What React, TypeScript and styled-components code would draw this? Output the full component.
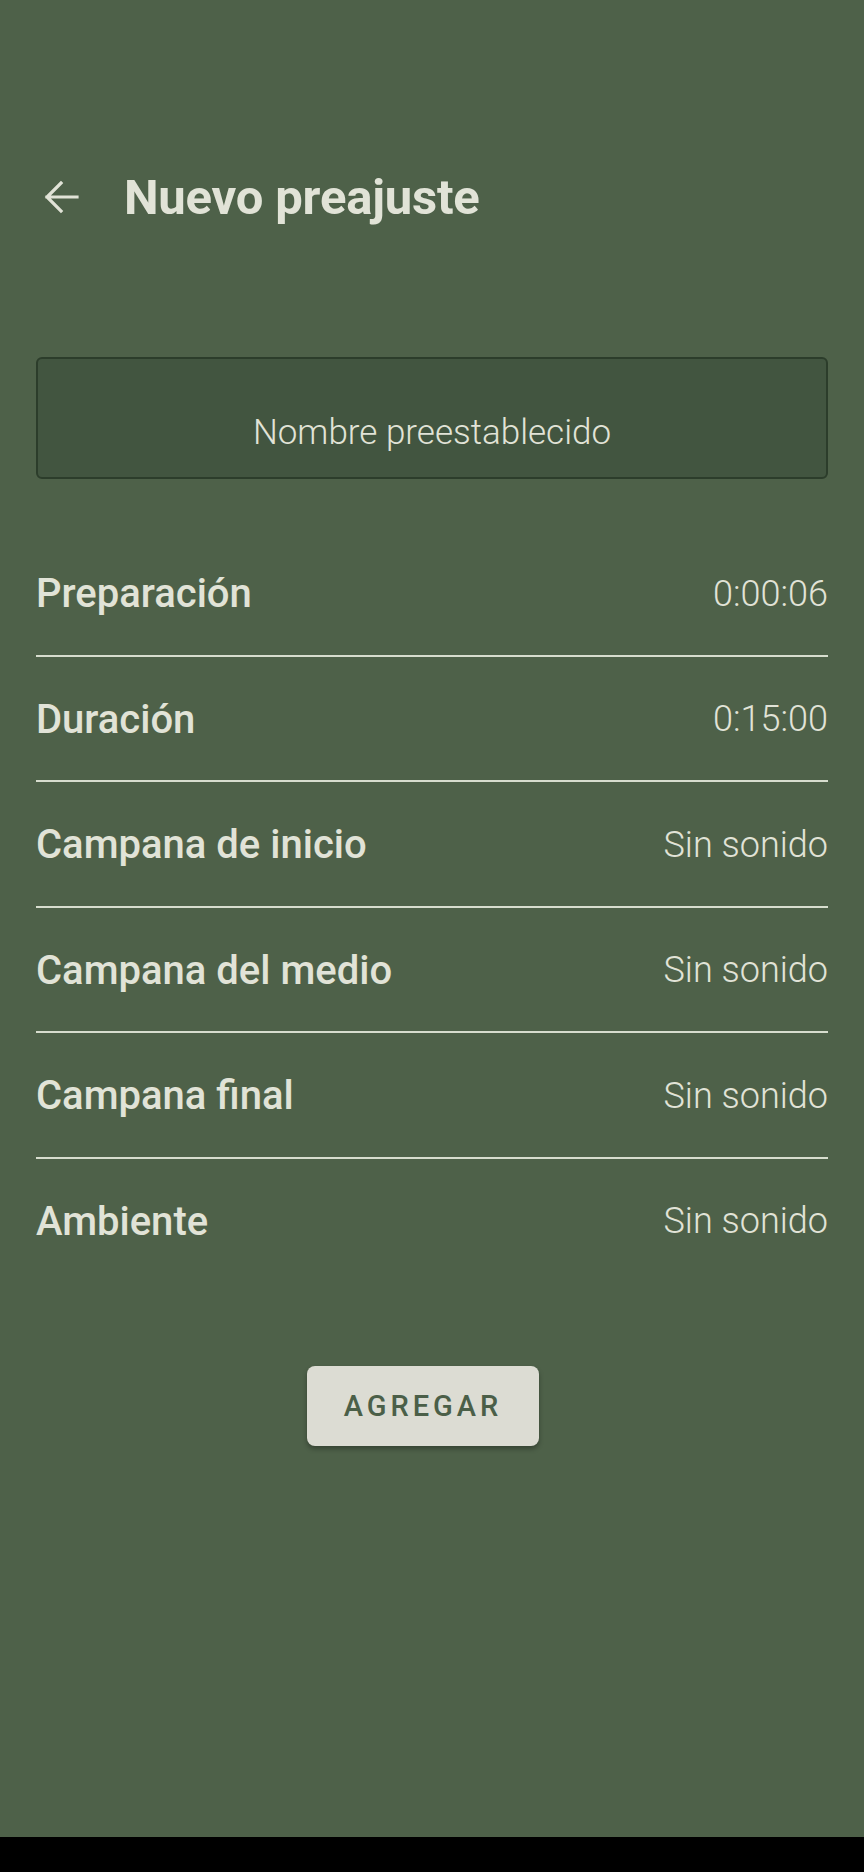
import styled, { createGlobalStyle } from 'styled-components';

const GlobalStyle = createGlobalStyle`
	html, body {
		margin: 0;
		padding: 0;
		background: #000;
	}
	* {
		box-sizing: border-box;
	}
`;

const StyledScreen = styled.div`
	display: flex;
	flex-direction: column;
	width: 864px;
	height: 1872px;
	font-family: Roboto, 'Noto Sans', sans-serif;
	color: #e1e3d7;
`;

const StyledMain = styled.main`
	flex: 1;
	background: #4e6149;
	display: flex;
	flex-direction: column;
`;

const StyledHeader = styled.header`
	display: flex;
	align-items: center;
	height: 120px;
	margin-top: 137px;
	padding-left: 43px;
	gap: 45px;
`;

const StyledBack = styled.button`
	display: flex;
	align-items: center;
	justify-content: center;
	width: 36px;
	height: 36px;
	padding: 0;
	border: none;
	background: none;
	color: #e1e3d7;
`;

const StyledTitle = styled.h1`
	margin: 0;
	font-size: 49px;
	font-weight: 700;
	letter-spacing: -0.2px;
`;

const StyledContent = styled.div`
	display: flex;
	flex-direction: column;
	padding: 0 36px;
`;

const StyledNameField = styled.div`
	display: flex;
	justify-content: center;
	align-items: flex-start;
	height: 122px;
	margin-top: 100px;
	padding-top: 54px;
	border: 2px solid #2c3d2b;
	border-radius: 6px;
	background: #425540;
	font-size: 35px;
	font-weight: 300;
	line-height: 40px;
	color: #e1e3d7;
`;

const StyledList = styled.div`
	display: flex;
	flex-direction: column;
	margin-top: 52px;
`;

const StyledRow = styled.div<{ $last?: boolean }>`
	display: flex;
	align-items: center;
	justify-content: space-between;
	height: 125.5px;
	padding-top: 2px;
	border-bottom: 2px solid ${({ $last }) => ($last ? 'transparent' : '#d7ddce')};
`;

const StyledLabel = styled.span`
	font-size: 40px;
	font-weight: 500;
`;

const StyledValue = styled.span`
	font-size: 36px;
	font-weight: 300;
`;

const StyledButtonRow = styled.div`
	display: flex;
	justify-content: center;
	margin-top: 82px;
	padding-right: 18px;
`;

const StyledButton = styled.button`
	width: 232px;
	height: 80px;
	border: none;
	border-radius: 8px;
	background: #dcdcd3;
	color: #4b5f48;
	font-family: Roboto, 'Noto Sans', sans-serif;
	font-size: 29px;
	font-weight: 500;
	letter-spacing: 4px;
	box-shadow: 0 3px 5px rgba(0, 0, 0, 0.3);
`;

const StyledNavBar = styled.div`
	height: 35px;
	background: #000;
`;

const settings = [
	{ label: 'Preparación', value: '0:00:06' },
	{ label: 'Duración', value: '0:15:00' },
	{ label: 'Campana de inicio', value: 'Sin sonido' },
	{ label: 'Campana del medio', value: 'Sin sonido' },
	{ label: 'Campana final', value: 'Sin sonido' },
	{ label: 'Ambiente', value: 'Sin sonido' },
];

const App = () => {
	return (
		<>
			<GlobalStyle />
			<StyledScreen>
				<StyledMain>
					<StyledHeader>
						<StyledBack aria-label="Atrás">
							<svg
								width="36"
								height="36"
								viewBox="0 0 36 36"
								fill="none"
								stroke="currentColor"
								strokeWidth="3.2"
								strokeLinecap="square"
							>
								<path d="M34 18H4M18 4L4 18l14 14" />
							</svg>
						</StyledBack>
						<StyledTitle>Nuevo preajuste</StyledTitle>
					</StyledHeader>
					<StyledContent>
						<StyledNameField>Nombre preestablecido</StyledNameField>
						<StyledList>
							{settings.map((s, i) => (
								<StyledRow key={s.label} $last={i === settings.length - 1}>
									<StyledLabel>{s.label}</StyledLabel>
									<StyledValue>{s.value}</StyledValue>
								</StyledRow>
							))}
						</StyledList>
						<StyledButtonRow>
							<StyledButton>AGREGAR</StyledButton>
						</StyledButtonRow>
					</StyledContent>
				</StyledMain>
				<StyledNavBar />
			</StyledScreen>
		</>
	);
};

export default App;
